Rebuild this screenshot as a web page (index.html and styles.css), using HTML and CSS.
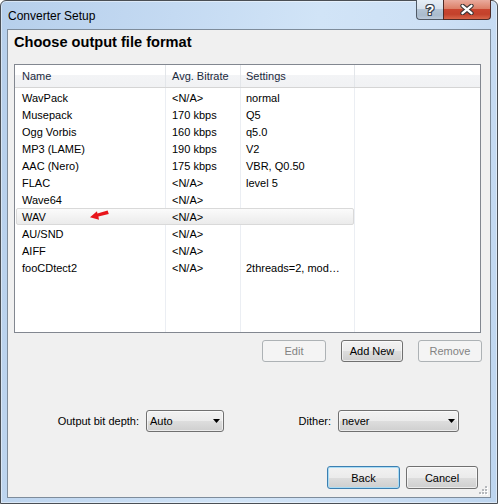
FILE: index.html
```html
<!DOCTYPE html>
<html>
<head>
<meta charset="utf-8">
<link rel="stylesheet" href="styles.css">
</head>
<body>
<div class="window">
  <div class="titlebar">
    <span class="title">Converter Setup</span>
    <div class="caption">
      <div class="cap-btn cap-help"><span class="qmark">?</span></div>
      <div class="cap-btn cap-close">
        <svg width="14" height="11" viewBox="0 0 14 11">
          <path d="M2.5 1.8 L11.5 9.2 M11.5 1.8 L2.5 9.2" stroke="#3b3535" stroke-width="4.4" stroke-linecap="round"/>
          <path d="M2.5 1.8 L11.5 9.2 M11.5 1.8 L2.5 9.2" stroke="#ffffff" stroke-width="2.3" stroke-linecap="round"/>
        </svg>
      </div>
    </div>
  </div>
  <div class="client">
    <h1 class="heading">Choose output file format</h1>
    <div class="list">
      <div class="list-head">
        <div class="hcell c1">Name</div>
        <div class="hcell c2">Avg. Bitrate</div>
        <div class="hcell c3">Settings</div>
        <div class="hcell c4"></div>
      </div>
      <div class="list-body">
        <div class="row"><span class="c1">WavPack</span><span class="c2">&lt;N/A&gt;</span><span class="c3">normal</span></div>
        <div class="row"><span class="c1">Musepack</span><span class="c2">170 kbps</span><span class="c3">Q5</span></div>
        <div class="row"><span class="c1">Ogg Vorbis</span><span class="c2">160 kbps</span><span class="c3">q5.0</span></div>
        <div class="row"><span class="c1">MP3 (LAME)</span><span class="c2">190 kbps</span><span class="c3">V2</span></div>
        <div class="row"><span class="c1">AAC (Nero)</span><span class="c2">175 kbps</span><span class="c3">VBR, Q0.50</span></div>
        <div class="row"><span class="c1">FLAC</span><span class="c2">&lt;N/A&gt;</span><span class="c3">level 5</span></div>
        <div class="row"><span class="c1">Wave64</span><span class="c2">&lt;N/A&gt;</span><span class="c3"></span></div>
        <div class="row sel"><span class="c1">WAV</span><span class="c2">&lt;N/A&gt;</span><span class="c3"></span></div>
        <div class="row"><span class="c1">AU/SND</span><span class="c2">&lt;N/A&gt;</span><span class="c3"></span></div>
        <div class="row"><span class="c1">AIFF</span><span class="c2">&lt;N/A&gt;</span><span class="c3"></span></div>
        <div class="row"><span class="c1">fooCDtect2</span><span class="c2">&lt;N/A&gt;</span><span class="c3">2threads=2, mod…</span></div>
        <svg class="arrow" width="21" height="12" viewBox="0 0 21 12">
          <polygon points="1,8.2 8,2.3 8.4,4.6 18.6,1.4 19.8,4.9 9.4,7.6 10,10.8" fill="#e8151b"/>
        </svg>
      </div>
    </div>
    <div class="btn-row">
      <div class="btn disabled w-edit">Edit</div>
      <div class="btn w-add">Add New</div>
      <div class="btn disabled w-remove">Remove</div>
    </div>
    <div class="combo-row">
      <span class="label label-depth">Output bit depth:</span>
      <div class="combo combo-depth"><span>Auto</span>
        <svg class="drop" width="7" height="4" viewBox="0 0 7 4"><polygon points="0,0 7,0 3.5,4" fill="#000"/></svg>
      </div>
      <span class="label label-dither">Dither:</span>
      <div class="combo combo-dither"><span>never</span>
        <svg class="drop" width="7" height="4" viewBox="0 0 7 4"><polygon points="0,0 7,0 3.5,4" fill="#000"/></svg>
      </div>
    </div>
    <div class="dlg-row">
      <div class="btn default w-back">Back</div>
      <div class="btn w-cancel">Cancel</div>
    </div>
    <svg class="grip" width="10" height="10" viewBox="0 0 10 10">
      <rect x="7" y="1" width="2" height="2" fill="#fff"/><rect x="6" y="0" width="2" height="2" fill="#b5b8bc"/>
      <rect x="4" y="4" width="2" height="2" fill="#fff"/><rect x="3" y="3" width="2" height="2" fill="#b5b8bc"/>
      <rect x="7" y="4" width="2" height="2" fill="#fff"/><rect x="6" y="3" width="2" height="2" fill="#b5b8bc"/>
      <rect x="1" y="7" width="2" height="2" fill="#fff"/><rect x="0" y="6" width="2" height="2" fill="#b5b8bc"/>
      <rect x="4" y="7" width="2" height="2" fill="#fff"/><rect x="3" y="6" width="2" height="2" fill="#b5b8bc"/>
      <rect x="7" y="7" width="2" height="2" fill="#fff"/><rect x="6" y="6" width="2" height="2" fill="#b5b8bc"/>
    </svg>
  </div>
</div>
</body>
</html>
```
FILE: styles.css
```css
* { box-sizing: border-box; }
html, body { margin: 0; padding: 0; }
body {
  width: 498px;
  height: 504px;
  overflow: hidden;
  font-family: "Liberation Sans", Arial, sans-serif;
  font-size: 11px;
  color: #000;
  background: #fff;
}
.window {
  width: 498px;
  height: 504px;
  border: 1px solid #4a4f55;
  border-radius: 6px 6px 0 0;
  background: linear-gradient(100deg, #b6cfeb 0%, #c4daf2 30%, #d1e4f7 55%, #cde0f5 75%, #bdd5ef 100%);
  box-shadow: inset 0 0 0 1px rgba(255,255,255,0.45);
  display: flex;
  flex-direction: column;
}
.titlebar {
  height: 28px;
  display: flex;
  align-items: flex-start;
  flex-shrink: 0;
}
.title {
  font-size: 12px;
  line-height: 12px;
  margin-top: 9px;
  margin-left: 7px;
  color: #000;
}
.caption {
  display: flex;
  margin-left: auto;
  margin-right: 6px;
  margin-top: -1px;
}
.cap-btn {
  height: 20px;
  display: flex;
  align-items: center;
  justify-content: center;
  border: 1px solid #505a66;
  border-top: none;
}
.cap-help {
  width: 27px;
  border-right: none;
  border-radius: 0 0 0 4px;
  background: linear-gradient(#e6eef6 0%, #d6e1ec 45%, #b4c4d5 50%, #a9bbcd 80%, #bccadb 100%);
}
.cap-close {
  width: 48px;
  border-color: #4f2b27;
  border-radius: 0 0 4px 0;
  background: linear-gradient(#e9ab9d 0%, #dc8068 45%, #c9452f 50%, #c3412b 75%, #d7664a 100%);
}
.qmark {
  font-weight: bold;
  font-size: 14px;
  line-height: 14px;
  color: #fff;
  margin-top: 1px;
  text-shadow: 1px 0 0 #3e4650, -1px 0 0 #3e4650, 0 1px 0 #3e4650, 0 -1px 0 #3e4650,
               1px 1px 0 #3e4650, -1px -1px 0 #3e4650, 1px -1px 0 #3e4650, -1px 1px 0 #3e4650;
}
.cap-close svg { display: block; }

.client {
  position: relative;
  margin: 0 6px 5px 6px;
  height: 469px;
  border: 1px solid #7e8c9b;
  background: #f0f0f0;
  display: flex;
  flex-direction: column;
}
.heading {
  margin: 4px 0 0 6px;
  font-size: 14.6px;
  line-height: 17px;
  height: 17px;
  font-weight: bold;
  color: #000;
}
.list {
  margin: 13px 0 0 6px;
  width: 467px;
  height: 269px;
  border: 1px solid #828790;
  background: #fff;
  display: flex;
  flex-direction: column;
}
.list-head {
  height: 23px;
  display: grid;
  grid-template-columns: 151px 75px 114px 1fr;
  border-bottom: 1px solid #d5d5d5;
  background: linear-gradient(#ffffff 0%, #ffffff 45%, #f3f4f6 46%, #f1f2f4 100%);
}
.hcell {
  padding-top: 1px;
  line-height: 21px;
  color: #1b2a3d;
  border-right: 1px solid #e3e6ea;
  white-space: nowrap;
}
.hcell.c4 { border-right: none; }
.list-head .c1 { padding-left: 7px; }
.list-head .c2 { padding-left: 6px; }
.list-head .c3 { padding-left: 5px; }

.list-body {
  position: relative;
  flex: 1;
  padding-top: 1px;
  background:
    linear-gradient(#ebeef3, #ebeef3) no-repeat 150px 0 / 1px 100%,
    linear-gradient(#ebeef3, #ebeef3) no-repeat 225px 0 / 1px 100%,
    linear-gradient(#ebeef3, #ebeef3) no-repeat 339px 0 / 1px 100%;
}
.row {
  width: 340px;
  height: 17px;
  padding-top: 1px;
  line-height: 16px;
  display: grid;
  grid-template-columns: 151px 75px 114px;
  white-space: nowrap;
}
.row .c1 { padding-left: 7px; }
.row .c2 { padding-left: 6px; }
.row .c3 { padding-left: 5px; }
.row.sel {
  width: 338px;
  margin-left: 1px;
  padding-top: 0;
  line-height: 16px;
  border: 1px solid #d9d9d9;
  border-radius: 2px;
  grid-template-columns: 149px 75px 112px;
  background: linear-gradient(#fbfbfb, #ebebeb);
}
.row.sel .c1 { padding-left: 5px; }
.arrow {
  position: absolute;
  left: 74px;
  top: 121px;
}

.btn {
  height: 22px;
  display: flex;
  align-items: center;
  justify-content: center;
  border: 1px solid #707070;
  border-radius: 3px;
  background: linear-gradient(#f2f2f2 0%, #ebebeb 50%, #dddddd 51%, #cfcfcf 100%);
  box-shadow: inset 0 0 0 1px rgba(255,255,255,0.6);
  color: #000;
}
.btn.disabled {
  border-color: #adb2b5;
  background: #f4f4f4;
  box-shadow: none;
  color: #838383;
}
.btn.default {
  border-color: #3c7fb1;
  box-shadow: inset 0 0 0 1px #a9dcf5;
}
.btn-row {
  display: flex;
  justify-content: flex-end;
  margin: 7px 8px 0 0;
}
.w-edit { width: 64px; }
.w-add { width: 62px; margin-left: 15px; }
.w-remove { width: 64px; margin-left: 15px; }

.combo-row {
  display: flex;
  align-items: center;
  height: 22px;
  margin-top: 48px;
}
.label { white-space: nowrap; }
.label-depth { margin-left: 40px; width: 91px; text-align: right; }
.label-dither { margin-left: auto; }
.combo {
  height: 22px;
  display: flex;
  align-items: center;
  padding-left: 3px;
  border: 1px solid #707070;
  border-radius: 3px;
  background: linear-gradient(#f2f2f2 0%, #ebebeb 50%, #dddddd 51%, #cfcfcf 100%);
  box-shadow: inset 0 0 0 1px rgba(255,255,255,0.6);
}
.combo-depth { width: 78px; margin-left: 7px; }
.combo-dither { width: 121px; margin-left: 7px; margin-right: 31px; }
.drop { margin-left: auto; margin-right: 3px; display: block; }

.dlg-row {
  display: flex;
  justify-content: flex-end;
  margin: 34px 12px 0 0;
}
.w-back { width: 73px; height: 23px; }
.w-cancel { width: 72px; height: 23px; margin-left: 6px; }
.grip {
  position: absolute;
  right: 1px;
  bottom: 1px;
}
```
